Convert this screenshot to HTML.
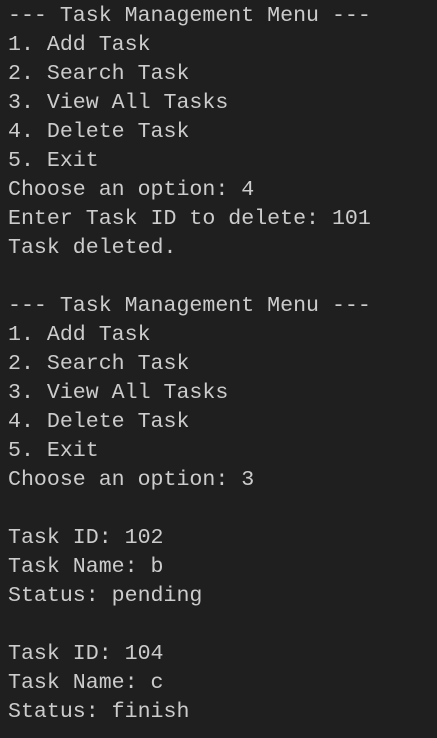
<!DOCTYPE html>
<html><head><style>
html,body{margin:0;padding:0;background:#1f1f1f;width:437px;height:738px;overflow:hidden}
pre{margin:0;padding:1.5px 0 0 8px;font-family:"Liberation Mono",monospace;font-size:21.6px;line-height:29px;color:#cccccc}
</style></head><body><pre>--- Task Management Menu ---
1. Add Task
2. Search Task
3. View All Tasks
4. Delete Task
5. Exit
Choose an option: 4
Enter Task ID to delete: 101
Task deleted.

--- Task Management Menu ---
1. Add Task
2. Search Task
3. View All Tasks
4. Delete Task
5. Exit
Choose an option: 3

Task ID: 102
Task Name: b
Status: pending

Task ID: 104
Task Name: c
Status: finish</pre></body></html>
